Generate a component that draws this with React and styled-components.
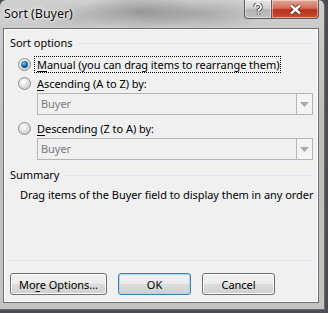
import React from "react"
import styled, { createGlobalStyle } from "styled-components"

const GlobalStyle = createGlobalStyle`
  html, body {
    margin: 0;
    padding: 0;
    background: #4a4d52;
    width: 328px;
    height: 313px;
    overflow: hidden;
  }
  * {
    box-sizing: border-box;
  }
`

const Window = styled.div`
  width: 325px;
  height: 310px;
  display: flex;
  flex-direction: column;
  padding: 0 5px 6px 3px;
  border-radius: 6px 6px 0 0;
  border-right: 1px solid #6b6b6b;
  border-bottom: 1px solid #6b6b6b;
  background:
    radial-gradient(ellipse 60px 18px at 140px 12px, rgba(110, 110, 110, 0.55), transparent),
    radial-gradient(ellipse 70px 16px at 200px 14px, rgba(120, 120, 120, 0.45), transparent),
    radial-gradient(ellipse 50px 14px at 80px 16px, rgba(150, 150, 150, 0.4), transparent),
    linear-gradient(180deg, #cfcfcf 0%, #bdbdbd 40%, #c4c4c4 100%);
  font-family: "Noto Sans", "DejaVu Sans", sans-serif;
  font-size: 11px;
  letter-spacing: -0.05px;
  color: #000;
`

const TitleBar = styled.div`
  height: 28px;
  display: flex;
  align-items: flex-start;
  justify-content: space-between;
`

const Title = styled.div`
  margin-top: 6px;
  margin-left: 1px;
  font-size: 12.5px;
  line-height: 16px;
  color: #111;
  text-shadow: 0 0 6px rgba(255, 255, 255, 0.9), 0 0 3px rgba(255, 255, 255, 0.9);
`

const Caption = styled.div`
  display: flex;
`

const CapButton = styled.div`
  width: ${(p) => p.$w}px;
  height: 19px;
  display: flex;
  align-items: center;
  justify-content: center;
  border: 1px solid #5b5b5b;
  border-top: none;
  background: ${(p) =>
    p.$close
      ? "linear-gradient(180deg, #e3a597 0%, #d0715c 45%, #b7301b 55%, #c8502e 100%)"
      : "linear-gradient(180deg, #e6e6e6 0%, #cfcfcf 45%, #b4b4b4 55%, #c0c0c0 100%)"};
  border-radius: ${(p) => (p.$close ? "0 0 4px 0" : "0 0 0 4px")};
  box-shadow: inset 0 0 0 1px rgba(255, 255, 255, 0.45);
  & + & {
    border-left: none;
  }
`

const Client = styled.div`
  flex: 1;
  display: flex;
  flex-direction: column;
  background: #f0f0f0;
  border: 1px solid #6f6f6f;
  box-shadow: inset 0 0 0 1px #ffffff;
  padding: 6px 5px 7px 6px;
`

const GroupHeader = styled.div`
  display: flex;
  align-items: center;
  gap: 7px;
  line-height: 16px;
  margin-top: ${(p) => p.$top || 0}px;
  &::after {
    content: "";
    flex: 1;
    height: 1px;
    background: #dde5ee;
  }
`

const RadioRow = styled.label`
  display: flex;
  align-items: center;
  height: 16px;
  margin-left: 8px;
  margin-top: ${(p) => p.$top}px;
`

const RadioText = styled.span`
  margin-left: 3px;
  padding: 0 1px 0 2px;
  line-height: 15px;
  border: 1px dotted ${(p) => (p.$focus ? "#000" : "transparent")};
`

const Key = styled.span`
  text-decoration: underline;
  text-underline-offset: 2px;
`

const Combo = styled.div`
  display: flex;
  height: 22px;
  margin-left: 27px;
  margin-top: ${(p) => p.$top}px;
  border: 1px solid #b5b5b5;
  background: #f0f0f0;
`

const ComboText = styled.div`
  flex: 1;
  padding-left: 3px;
  line-height: 20px;
  color: #7a7a7a;
`

const ComboButton = styled.div`
  width: 16px;
  display: flex;
  align-items: center;
  justify-content: center;
  border-left: 1px solid #b5b5b5;
  background: #f4f4f4;
`

const Summary = styled.div`
  margin: 4px 0 0 10px;
  line-height: 16px;
  white-space: nowrap;
`

const Spacer = styled.div`
  flex: 1;
`

const Divider = styled.div`
  height: 1px;
  background: #dde5ee;
  margin-right: 1px;
`

const ButtonRow = styled.div`
  display: flex;
  gap: 11px;
  margin-top: 12px;
`

const Button = styled.div`
  width: ${(p) => p.$w}px;
  height: 22px;
  display: flex;
  align-items: center;
  justify-content: center;
  border-radius: 3px;
  border: 1px solid ${(p) => (p.$default ? "#3c7fb1" : "#707070")};
  background: linear-gradient(180deg, #f2f2f2 0%, #ebebeb 50%, #dddddd 51%, #cfcfcf 100%);
  box-shadow: inset 0 0 0 1px ${(p) => (p.$default ? "#a7d9f5" : "#fcfcfc")};
`

const Radio = ({ checked }) => (
  <svg width="13" height="13" viewBox="0 0 13 13">
    <defs>
      <radialGradient id={checked ? "rbOn" : "rbOff"} cx="0.4" cy="0.35" r="0.7">
        <stop offset="0" stopColor="#ffffff" />
        <stop offset="1" stopColor="#c9c9c9" />
      </radialGradient>
      <radialGradient id="rbDot" cx="0.4" cy="0.35" r="0.7">
        <stop offset="0" stopColor="#7fc6f2" />
        <stop offset="0.6" stopColor="#1c6aa8" />
        <stop offset="1" stopColor="#0f3f6f" />
      </radialGradient>
    </defs>
    <circle cx="6.5" cy="6.5" r="6" fill={`url(#${checked ? "rbOn" : "rbOff"})`} stroke="#8f8f8f" />
    {checked && <circle cx="6.5" cy="6.5" r="3.4" fill="url(#rbDot)" />}
  </svg>
)

const Arrow = () => (
  <svg width="9" height="5" viewBox="0 0 9 5">
    <path d="M0 0 H9 L4.5 5 Z" fill="#a8a8a8" />
  </svg>
)

const App = () => {
  return (
    <>
      <GlobalStyle />
      <Window>
        <TitleBar>
          <Title>Sort (Buyer)</Title>
          <Caption>
            <CapButton $w={28}>
              <svg width="10" height="13" viewBox="0 0 10 13">
                <path
                  d="M2 4 Q2 1 5 1 Q8 1 8 4 Q8 6 5.5 7 V8.5 M5.5 10.5 V12"
                  fill="none"
                  stroke="#333"
                  strokeWidth="3.4"
                />
                <path
                  d="M2 4 Q2 1 5 1 Q8 1 8 4 Q8 6 5.5 7 V8.5 M5.5 10.5 V12"
                  fill="none"
                  stroke="#fff"
                  strokeWidth="1.8"
                />
              </svg>
            </CapButton>
            <CapButton $w={47} $close>
              <svg width="13" height="11" viewBox="0 0 13 11">
                <path d="M2 1.5 L11 9.5 M11 1.5 L2 9.5" stroke="#5a1d12" strokeWidth="4" />
                <path d="M2 1.5 L11 9.5 M11 1.5 L2 9.5" stroke="#fff" strokeWidth="2.4" />
              </svg>
            </CapButton>
          </Caption>
        </TitleBar>
        <Client>
          <GroupHeader>Sort options</GroupHeader>
          <RadioRow $top={5}>
            <Radio checked />
            <RadioText $focus>
              <Key>M</Key>anual (you can drag items to rearrange them)
            </RadioText>
          </RadioRow>
          <RadioRow $top={3}>
            <Radio />
            <RadioText>
              <Key>A</Key>scending (A to Z) by:
            </RadioText>
          </RadioRow>
          <Combo $top={2}>
            <ComboText>Buyer</ComboText>
            <ComboButton>
              <Arrow />
            </ComboButton>
          </Combo>
          <RadioRow $top={5}>
            <Radio />
            <RadioText>
              <Key>D</Key>escending (Z to A) by:
            </RadioText>
          </RadioRow>
          <Combo $top={2}>
            <ComboText>Buyer</ComboText>
            <ComboButton>
              <Arrow />
            </ComboButton>
          </Combo>
          <GroupHeader $top={7}>Summary</GroupHeader>
          <Summary>Drag items of the Buyer field to display them in any order</Summary>
          <Spacer />
          <Divider />
          <ButtonRow>
            <Button $w={97}>
              <span>
                Mo<Key>r</Key>e Options...
              </span>
            </Button>
            <Button $w={73} $default>
              OK
            </Button>
            <Button $w={73}>Cancel</Button>
          </ButtonRow>
        </Client>
      </Window>
    </>
  )
}

export default App
